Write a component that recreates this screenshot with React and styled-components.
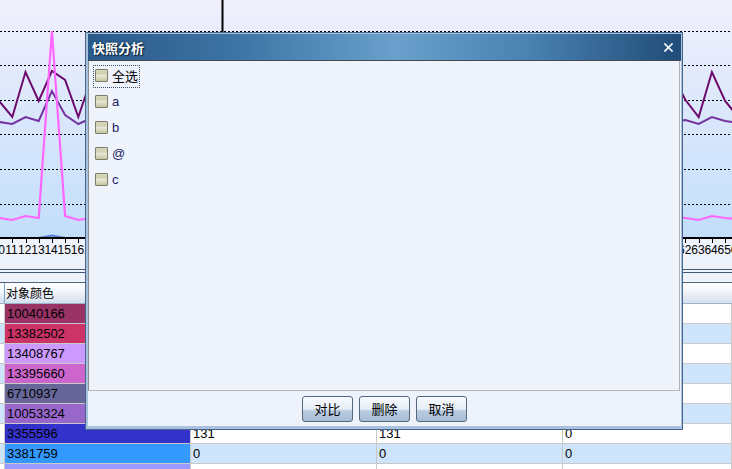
import React from "react";
import styled, { createGlobalStyle } from "styled-components";

const GlobalStyle = createGlobalStyle`
  html, body {
    margin: 0;
    padding: 0;
    background: #eef2fb;
    overflow: hidden;
  }
  body {
    font-family: "Liberation Sans", "Noto Sans CJK SC", sans-serif;
    color: #000;
  }
`;

const Page = styled.div`
  position: relative;
  width: 732px;
  height: 469px;
  overflow: hidden;
  background: #eef2fb;
`;

const ChartBox = styled.div`
  height: 269px;
  svg {
    display: block;
  }
`;

const Splitter = styled.div`
  height: 2px;
  border-top: 1px solid #3e5a78;
  border-bottom: 1px solid #3e5a78;
  margin-bottom: 9px;
`;

const Grid = styled.div`
  display: grid;
  grid-template-columns: 5px 186px 186px 186px 1fr;
`;

const HeaderRow = styled(Grid)`
  height: 20px;
  border-top: 1px solid #4d6580;
  border-bottom: 1px solid #9fb3c8;
  background: linear-gradient(#ffffff 0%, #f2f6fb 40%, #d4e0ee 100%);
`;

const HeaderCell = styled.div`
  font-size: 12px;
  line-height: 20px;
  padding-left: 1px;
  white-space: nowrap;
  font-family: "Noto Sans CJK SC", sans-serif;
  border-right: ${(p) => (p.$edge ? "1px solid #7ea0cc" : "none")};
`;

const Row = styled(Grid)`
  height: 20px;
  background: ${(p) => (p.$alt ? "#cde4fb" : "#ffffff")};
`;

const Cell = styled.div`
  box-sizing: border-box;
  border-right: 1px solid #c9c9c9;
  border-bottom: 1px solid #c9c9c9;
  padding-left: 2px;
  font-size: 13px;
  line-height: 19px;
  white-space: nowrap;
  overflow: hidden;
  background: ${(p) => p.$color || "transparent"};
`;

/* ---------- dialog ---------- */

const Dialog = styled.div`
  position: absolute;
  left: 85px;
  top: 32px;
  width: 598px;
  height: 398px;
  box-sizing: border-box;
  border: 1px solid #47648a;
  background: #a8c2de;
  padding: 1px 1px 3px 2px;
  display: flex;
  flex-direction: column;
`;

const TitleBar = styled.div`
  height: 26px;
  border-bottom: 1px solid #3c4a58;
  display: flex;
  align-items: center;
  justify-content: space-between;
  padding: 0 8px 0 4px;
  background: linear-gradient(
    90deg,
    #2b5a89 0%,
    #3d74a4 25%,
    #6aa0cb 52%,
    #4a82b1 74%,
    #214c79 100%
  );
`;

const TitleText = styled.span`
  color: #ffffff;
  font-family: "Noto Sans CJK SC", sans-serif;
  font-size: 13px;
  font-weight: bold;
  text-shadow: 1px 1px 1px #0c2440, 0 0 2px #0c2440;
`;

const CloseBtn = styled.span`
  display: flex;
  width: 9px;
  height: 9px;
`;

const Body = styled.div`
  flex: 1;
  display: flex;
  flex-direction: column;
  background: #eef2fa;
`;

const ListPanel = styled.div`
  height: 330px;
  box-sizing: border-box;
  margin-right: 1px;
  border-left: 1px solid #8c8c8c;
  border-right: 1px solid #b0b0b0;
  border-bottom: 1px solid #b8b8b8;
  padding: 3px 0 0 4px;
  background: #eff3fb;
`;

const ItemRow = styled.div`
  height: 26px;
  display: flex;
  align-items: flex-start;
`;

const ItemBox = styled.label`
  margin-top: 1px;
  display: inline-flex;
  align-items: center;
  gap: 4px;
  padding: 3px 1px 5px 1px;
  border: 1px dotted ${(p) => (p.$focused ? "#3a4e66" : "transparent")};
`;

const CheckBox = styled.span`
  width: 13px;
  height: 13px;
  box-sizing: border-box;
  border: 1px solid #7e7e68;
  border-radius: 1px;
  background: linear-gradient(
    180deg,
    #d8d8bc 0%,
    #d0d0b2 30%,
    #e6e6d4 50%,
    #dadac0 70%,
    #c4c4a2 100%
  );
`;

const ItemLabel = styled.span`
  font-size: 13px;
  line-height: 13px;
  color: ${(p) => (p.$cjk ? "#000000" : "#1c1c66")};
  font-family: ${(p) =>
    p.$cjk
      ? '"Noto Sans CJK SC", sans-serif'
      : '"Liberation Sans", sans-serif'};
`;

const ButtonBar = styled.div`
  flex: 1;
  display: flex;
  justify-content: center;
  gap: 6px;
  padding-top: 5px;
`;

const DlgButton = styled.button`
  width: 51px;
  height: 26px;
  padding: 0;
  border: 1px solid #55677b;
  border-radius: 3px;
  font-family: "Noto Sans CJK SC", sans-serif;
  font-size: 13px;
  line-height: 24px;
  color: #000;
  background: linear-gradient(
    180deg,
    #f8fafd 0%,
    #e6edf6 50%,
    #b8cbe0 58%,
    #a7bdd6 100%
  );
`;

/* ---------- data ---------- */

const xOf = (k) => 12.3 + 13.2 * k;
const KS = Array.from({ length: 57 }, (_, i) => i - 1);

const darkKnown = { "-1": 101, 0: 117, 1: 72, 2: 101, 3: 71, 4: 80, 5: 117, 6: 78, 51: 100, 52: 117, 53: 72, 54: 101, 55: 117 };
const medKnown = { "-1": 122, 0: 124, 1: 117, 2: 121, 3: 91, 4: 115, 5: 124, 6: 118, 51: 120, 52: 124, 53: 117, 54: 121, 55: 123 };
const pinkKnown = { "-1": 218, 0: 220, 1: 216, 2: 218, 3: 31, 4: 216, 5: 220, 6: 218, 51: 218, 52: 220, 53: 216, 54: 218, 55: 219 };

const series = (known, fill) =>
  KS.map((k) => `${xOf(k).toFixed(1)},${(known[k] ?? fill(k)).toFixed(1)}`).join(" ");

const darkPts = series(darkKnown, (k) => 96 + 22 * Math.sin(k * 2.1));
const medPts = series(medKnown, (k) => 118 + 5 * Math.sin(k * 1.3));
const pinkPts = series(pinkKnown, (k) => 218 + 2 * Math.sin(k));
const bluePts = KS.map((k) => `${xOf(k).toFixed(1)},${k === 3 ? 235.5 : 238}`).join(" ");

const GRID_Y = [31.5, 65.5, 100.5, 134.5, 169.5, 204.5];

// rows hidden under the dialog keep their other columns empty
const rows = [
  ["10040166", "#993366", "", "", ""],
  ["13382502", "#cc3366", "", "", ""],
  ["13408767", "#cc99ff", "", "", ""],
  ["13395660", "#cc66cc", "", "", ""],
  ["6710937", "#666699", "", "", ""],
  ["10053324", "#9966cc", "", "", ""],
  ["3355596", "#3333cc", "131", "131", "0"],
  ["3381759", "#3399ff", "0", "0", "0"],
  ["10066431", "#9999ff", "994", "994", "1"],
];

const items = [
  { label: "全选", cjk: true, focused: true },
  { label: "a" },
  { label: "b" },
  { label: "@" },
  { label: "c" },
];

function Chart() {
  return (
    <svg width="732" height="269" viewBox="0 0 732 269">
      <defs>
        <linearGradient id="plotBg" x1="0" y1="0" x2="0" y2="1">
          <stop offset="0" stopColor="#f0f0fc" />
          <stop offset="1" stopColor="#c2defb" />
        </linearGradient>
      </defs>
      <rect x="0" y="0" width="732" height="238" fill="url(#plotBg)" />
      {GRID_Y.map((y) => (
        <line key={y} x1="0" x2="732" y1={y} y2={y} stroke="#000" strokeWidth="1" strokeDasharray="2 2" />
      ))}
      <line x1="222.5" x2="222.5" y1="0" y2="238" stroke="#000" strokeWidth="2" />
      <polyline points={bluePts} fill="none" stroke="#3b6cc8" strokeWidth="2" opacity="0.8" />
      <polyline points={medPts} fill="none" stroke="#7434a0" strokeWidth="2" />
      <polyline points={darkPts} fill="none" stroke="#6e0a6e" strokeWidth="2" />
      <polyline points={pinkPts} fill="none" stroke="#ff66ff" strokeWidth="2.2" />
      <line x1="0" x2="732" y1="238" y2="238" stroke="#000" strokeWidth="2" />
      {KS.map((k) => (
        <line key={k} x1={Math.round(xOf(k)) + 0.5} x2={Math.round(xOf(k)) + 0.5} y1="238" y2="243" stroke="#000" strokeWidth="1" />
      ))}
      {KS.map((k) => (
        <text
          key={k}
          x={xOf(k) - 0.8}
          y="254"
          textAnchor="middle"
          fontSize="12"
          fontFamily="Liberation Sans, sans-serif"
          fill="#000"
        >
          {11 + k}
        </text>
      ))}
    </svg>
  );
}

export default function App() {
  return (
    <>
      <GlobalStyle />
      <Page>
        <ChartBox>
          <Chart />
        </ChartBox>
        <Splitter />
        <HeaderRow>
          <HeaderCell $edge />
          <HeaderCell>对象颜色</HeaderCell>
          <HeaderCell />
          <HeaderCell />
          <HeaderCell />
        </HeaderRow>
        {rows.map(([id, color, a, b, c], i) => (
          <Row key={id} $alt={i % 2 === 1}>
            <Cell />
            <Cell $color={color}>{id}</Cell>
            <Cell>{a}</Cell>
            <Cell>{b}</Cell>
            <Cell>{c}</Cell>
          </Row>
        ))}

        <Dialog>
          <TitleBar>
            <TitleText>快照分析</TitleText>
            <CloseBtn>
              <svg width="9" height="9" viewBox="0 0 9 9">
                <path d="M1 1 L8 8 M8 1 L1 8" stroke="#fff" strokeWidth="1.6" strokeLinecap="square" />
              </svg>
            </CloseBtn>
          </TitleBar>
          <Body>
            <ListPanel>
              {items.map((it) => (
                <ItemRow key={it.label}>
                  <ItemBox $focused={it.focused}>
                    <CheckBox />
                    <ItemLabel $cjk={it.cjk}>{it.label}</ItemLabel>
                  </ItemBox>
                </ItemRow>
              ))}
            </ListPanel>
            <ButtonBar>
              <DlgButton>对比</DlgButton>
              <DlgButton>删除</DlgButton>
              <DlgButton>取消</DlgButton>
            </ButtonBar>
          </Body>
        </Dialog>
      </Page>
    </>
  );
}
